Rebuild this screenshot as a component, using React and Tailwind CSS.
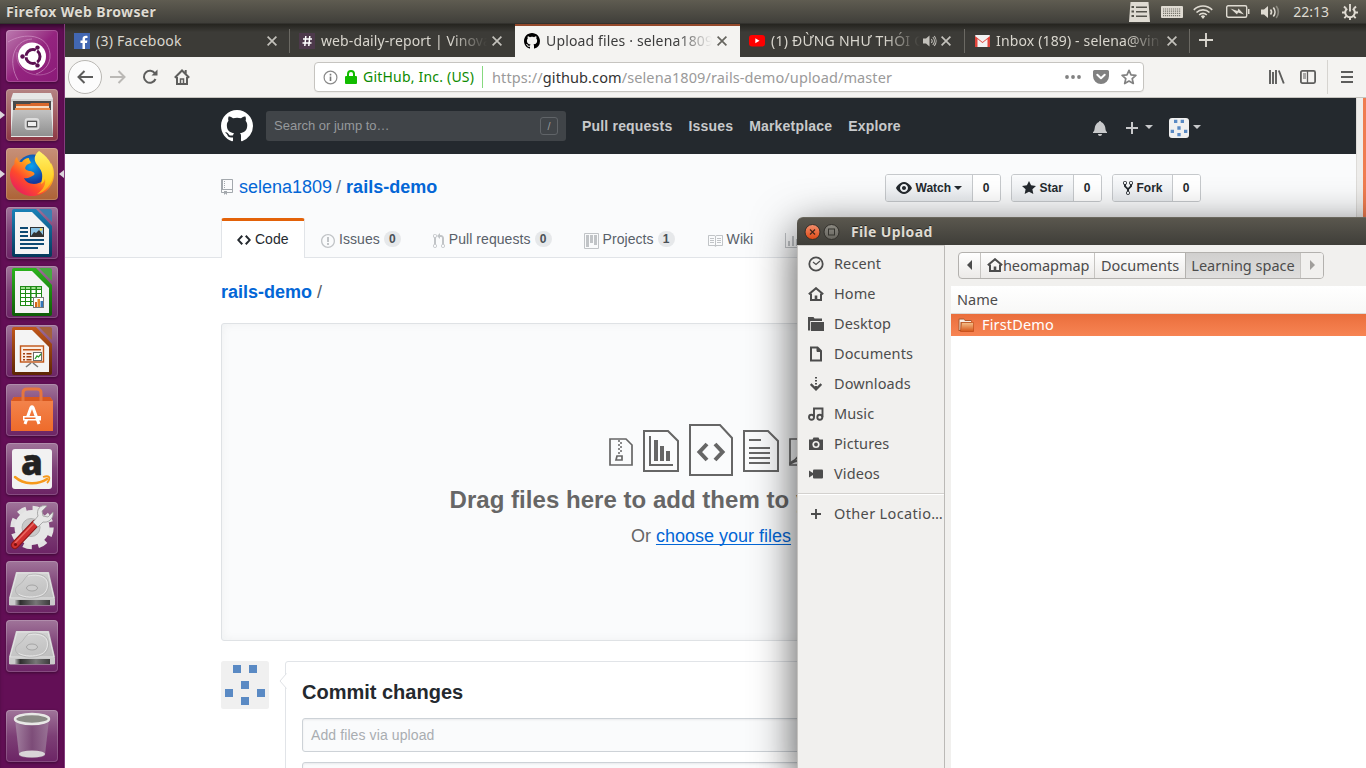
import React from "react";

const UI = "font-['Noto_Sans','Open_Sans',sans-serif]";

const OCT = {
  github: [16, "M8 0C3.58 0 0 3.58 0 8c0 3.54 2.29 6.53 5.47 7.59.4.07.55-.17.55-.38 0-.19-.01-.82-.01-1.49-2.01.37-2.53-.49-2.69-.94-.09-.23-.48-.94-.82-1.13-.28-.15-.68-.52-.01-.53.63-.01 1.08.58 1.23.82.72 1.21 1.87.87 2.33.66.07-.52.28-.87.51-1.07-1.78-.2-3.64-.89-3.64-3.95 0-.87.31-1.59.82-2.15-.08-.2-.36-1.02.08-2.12 0 0 .67-.21 2.2.82.64-.18 1.32-.27 2-.27.68 0 1.36.09 2 .27 1.53-1.04 2.2-.82 2.2-.82.44 1.1.16 1.92.08 2.12.51.56.82 1.27.82 2.15 0 3.07-1.87 3.75-3.65 3.95.29.25.54.73.54 1.48 0 1.07-.01 1.93-.01 2.2 0 .21.15.46.55.38A8.013 8.013 0 0 0 16 8c0-4.42-3.58-8-8-8z"],
  repo: [12, "M4 9H3V8h1v1zm0-3H3v1h1V6zm0-2H3v1h1V4zm0-2H3v1h1V2zm8-1v12c0 .55-.45 1-1 1H6v2l-1.5-1.5L3 16v-2H1c-.55 0-1-.45-1-1V1c0-.55.45-1 1-1h10c.55 0 1 .45 1 1zm-1 10H1v2h2v-1h3v1h5v-2zm0-10H2v9h9V1z"],
  code: [14, "M9.5 3L8 4.5 11.5 8 8 11.5 9.5 13 14 8 9.5 3zm-5 0L0 8l4.5 5L6 11.5 2.5 8 6 4.5 4.5 3z"],
  issue: [14, "M7 2.3c3.14 0 5.7 2.56 5.7 5.7s-2.56 5.7-5.7 5.7A5.71 5.71 0 0 1 1.3 8c0-3.14 2.56-5.7 5.7-5.7zM7 1C3.14 1 0 4.14 0 8s3.14 7 7 7 7-3.14 7-7-3.14-7-7-7zm1 3H6v5h2V4zm0 6H6v2h2v-2z"],
  pr: [12, "M11 11.28V5c-.03-.78-.34-1.47-.94-2.06C9.46 2.35 8.78 2.03 8 2H7V0L4 3l3 3V4h1c.27.02.48.11.69.31.21.2.3.42.31.69v6.28A1.993 1.993 0 0 0 10 15a1.993 1.993 0 0 0 1-3.72zm-1 2.92c-.66 0-1.2-.55-1.2-1.2 0-.65.55-1.2 1.2-1.2.65 0 1.2.55 1.2 1.2 0 .65-.55 1.2-1.2 1.2zM4 3c0-1.11-.89-2-2-2a1.993 1.993 0 0 0-1 3.72v6.56A1.993 1.993 0 0 0 2 15a1.993 1.993 0 0 0 1-3.72V4.72c.59-.34 1-.98 1-1.72zm-.8 10c0 .66-.55 1.2-1.2 1.2-.65 0-1.2-.55-1.2-1.2 0-.65.55-1.2 1.2-1.2.65 0 1.2.55 1.2 1.2zM2 4.2C1.34 4.2.8 3.65.8 3c0-.65.55-1.2 1.2-1.2.65 0 1.2.55 1.2 1.2 0 .65-.55 1.2-1.2 1.2z"],
  project: [15, "M10 12h3V2h-3v10zm-4-2h3V2H6v8zm-4 4h3V2H2v12zm-1 1h13V1H1v14zM14 0H1a1 1 0 0 0-1 1v14a1 1 0 0 0 1 1h13a1 1 0 0 0 1-1V1a1 1 0 0 0-1-1z"],
  book: [16, "M3 5h4v1H3V5zm0 3h4V7H3v1zm0 2h4V9H3v1zm11-5h-4v1h4V5zm0 2h-4v1h4V7zm0 2h-4v1h4V9zm2-6v9c0 .55-.45 1-1 1H9.5l-1 1-1-1H2c-.55 0-1-.45-1-1V3c0-.55.45-1 1-1h5.5l1 1 1-1H15c.55 0 1 .45 1 1zm-8 .5L7.5 3H2v9h6V3.5zm7-.5H9.5l-.5.5V12h6V3z"],
  graph: [16, "M16 14v1H0V0h1v14h15zM5 13H3V8h2v5zm4 0H7V3h2v10zm4 0h-2V6h2v7z"],
  bell: [14, "M14 12v1H0v-1l.73-.58c.77-.77.81-2.55 1.19-4.42C2.69 3.23 6 2 6 2c0-.55.45-1 1-1s1 .45 1 1c0 0 3.39 1.23 4.16 5 .38 1.88.42 3.66 1.19 4.42l.66.58H14zm-7 4c1.11 0 2-.89 2-2H5c0 1.11.89 2 2 2z"],
  plus: [12, "M12 9H7v5H5V9H0V7h5V2h2v5h5v2z"],
  eye: [16, "M8.06 2C3 2 0 8 0 8s3 6 8.06 6C13 14 16 8 16 8s-3-6-7.94-6zM8 12c-2.2 0-4-1.78-4-4 0-2.2 1.8-4 4-4 2.22 0 4 1.8 4 4 0 2.22-1.78 4-4 4zm2-4c0 1.11-.89 2-2 2-1.11 0-2-.89-2-2 0-1.11.89-2 2-2 1.11 0 2 .89 2 2z"],
  star: [14, "M14 6l-4.9-.64L7 1 4.9 5.36 0 6l3.6 3.26L2.67 14 7 11.67 11.33 14l-.93-4.74L14 6z"],
  fork: [10, "M8 1a1.993 1.993 0 0 0-1 3.72V6L5 8 3 6V4.72A1.993 1.993 0 0 0 2 1a1.993 1.993 0 0 0-1 3.72V6.5l3 3v1.78A1.993 1.993 0 0 0 5 15a1.993 1.993 0 0 0 1-3.72V9.5l3-3V4.72A1.993 1.993 0 0 0 8 1zM2 4.2C1.34 4.2.8 3.65.8 3c0-.65.55-1.2 1.2-1.2.65 0 1.2.55 1.2 1.2 0 .65-.55 1.2-1.2 1.2zm3 10c-.66 0-1.2-.55-1.2-1.2 0-.65.55-1.2 1.2-1.2.65 0 1.2.55 1.2 1.2 0 .65-.55 1.2-1.2 1.2zm3-10c-.66 0-1.2-.55-1.2-1.2 0-.65.55-1.2 1.2-1.2.65 0 1.2.55 1.2 1.2 0 .65-.55 1.2-1.2 1.2z"],
};

function Oct({ n, h = 16, className = "" }) {
  const [w, d] = OCT[n];
  return (
    <svg width={(w * h) / 16} height={h} viewBox={`0 0 ${w} 16`} className={"shrink-0 " + className} fill="currentColor" fillRule="evenodd">
      <path d={d} />
    </svg>
  );
}

/* ---------- top panel ---------- */

function TopPanel() {
  return (
    <div className={UI + " flex h-6 shrink-0 items-center border-b border-[#33322e] bg-linear-to-b from-[#5f5c51] to-[#403f3a] pl-1.5 text-[#dfdbd2]"}>
      <span className="flex-1 text-[14px] leading-none font-bold tracking-[0.36px] [text-shadow:0_-1px_0_rgba(0,0,0,0.4)]">Firefox Web Browser</span>
      <svg width="21" height="20" viewBox="0 0 21 20" className="mr-[11px]">
        <path d="M1.500 0h18L21 20H0z" fill="#dfdbd2" />
        <g fill="#55534b">
          <path d="M2.500 4h2.500v2H2.500zM7 4.500h11V6H7zM2.500 8.500h2.500v2H2.500zM7 9h11v1.500H7zM2.500 13h2.500v2H2.500zM7 13.500h11V15H7z" />
        </g>
      </svg>
      <svg width="22" height="12" viewBox="0 0 22 12" className="mr-[10px]">
        <rect width="22" height="12" rx="1" fill="#dfdbd2" />
        <g stroke="#77756c" strokeWidth="1.200" strokeDasharray="1.200 .8">
          <path d="M2 3h18M2 5.200h18M2 7.400h18M2 9.600h18" />
        </g>
      </svg>
      <svg width="20" height="14" viewBox="0 0 20 14" className="mr-[13px]" fill="none" stroke="#dfdbd2" strokeWidth="1.700">
        <path d="M.8 4.800a13 13 0 0 1 18.400 0M3.500 7.500a9.300 9.300 0 0 1 13 0M6.200 10a5.400 5.400 0 0 1 7.600 0" />
        <path d="M7.800 11.300L10 14l2.200-2.700a3.400 3.400 0 0 0-4.400 0z" fill="#dfdbd2" stroke="none" />
      </svg>
      <svg width="24" height="13" viewBox="0 0 24 13" className="mr-[11px]">
        <rect x=".7" y=".7" width="20" height="11.600" rx="1.500" fill="none" stroke="#dfdbd2" strokeWidth="1.400" />
        <path d="M22 4h1.500v5H22z" fill="#dfdbd2" />
        <path d="M4.500 3.500l7 2.500 1-2.500 5.500 6-6-2-1 2z" fill="#dfdbd2" />
      </svg>
      <svg width="20" height="14" viewBox="0 0 20 14" className="mr-[12px]" fill="none" stroke="#dfdbd2" strokeWidth="1.700">
        <path d="M0 4.500h3L7 1v12L3 9.500H0z" fill="#dfdbd2" stroke="none" />
        <path d="M9.500 4.500a4 4 0 0 1 0 5M12.300 2.500a7 7 0 0 1 0 9" />
        <path d="M15.200 1a9.500 9.500 0 0 1 0 12" opacity=".4" />
      </svg>
      <span className="mr-[13px] text-[14px] leading-none">22:13</span>
      <svg width="16" height="16" viewBox="0 0 16 16" className="mr-[8px]" fill="none" stroke="#dfdbd2">
        <path d="M5.200 4.600a4.800 4.800 0 1 0 5.600 0" strokeWidth="2" />
        <path d="M8 0v7.500M0 8.500h3M13 8.500h3M2 2.500l2 2M14 2.500l-2 2M2.300 14.200l2-2M13.700 14.200l-2-2M8 13v3" strokeWidth="1.900" />
      </svg>
    </div>
  );
}

/* ---------- launcher ---------- */

const plain = "bg-linear-to-b from-[#a0759a] via-[#7d3f76] to-[#6c2465]";

function UbuntuIcon() {
  return (
    <svg width="52" height="52" viewBox="0 0 52 52">
      <g fill="none" stroke="#d9a3cf" opacity=".6">
        <path d="M2 12C18 2 42 4 44 24c1 12-8 18-14 20" />
        <path d="M12 50C2 34 6 10 26 9" />
        <path d="M50 38C36 52 8 44 11 22" opacity=".7" />
      </g>
      <circle cx="26" cy="26.500" r="14" fill="#fff" />
      <circle cx="27" cy="26.500" r="7" fill="none" stroke="#5c1152" strokeWidth="3" />
      <g stroke="#fff" strokeWidth="1.400">
        <path d="M27 26.500h-10M27 26.500l5-8.700M27 26.500l5 8.700" />
      </g>
      <circle cx="27" cy="26.500" r="5" fill="#fff" />
      <g fill="#5c1152"><circle cx="16.500" cy="26.500" r="2.200" /><circle cx="31.500" cy="17.600" r="2.200" /><circle cx="31.500" cy="35.400" r="2.200" /></g>
    </svg>
  );
}

function FilesIcon() {
  return (
    <svg width="52" height="52" viewBox="0 0 52 52">
      <defs><linearGradient id="cab" x2="0" y2="1"><stop stopColor="#c2c2c2" /><stop offset="1" stopColor="#8f8f8f" /></linearGradient></defs>
      <path d="M7 4h38l2 6v38H5V10z" fill="#e6e6e6" />
      <path d="M5 10h42v3H5z" fill="#d0d0d0" />
      <rect x="7" y="12" width="38" height="12" fill="#4a4a4a" />
      <path d="M10 15h14l1-1h18v8H10z" fill="#d9682c" />
      <path d="M10 17h33v2H10z" fill="#f8ddc4" /><path d="M9 19h35v4H9z" fill="#e88a48" />
      <path d="M7 21h38l2 26H5z" fill="url(#cab)" />
      <rect x="19.500" y="30" width="13" height="10" rx="2.500" fill="none" stroke="#ddd" strokeWidth="1.800" />
      <rect x="21.500" y="32.500" width="9" height="5" fill="#eee" stroke="#555" strokeWidth="1" />
    </svg>
  );
}

function FirefoxIcon() {
  return (
    <svg width="52" height="52" viewBox="0 0 52 52">
      <defs>
        <radialGradient id="ffb" cx=".45" cy=".35"><stop stopColor="#0aa4f0" /><stop offset="1" stopColor="#133a9c" /></radialGradient>
        <linearGradient id="fft" x1="1" y1="0" x2=".1" y2="1"><stop stopColor="#fff14f" /><stop offset=".35" stopColor="#ffb21c" /><stop offset=".65" stopColor="#ff4a2b" /><stop offset="1" stopColor="#e0126e" /></linearGradient>
        <linearGradient id="ffy" x2="0" y2="1"><stop stopColor="#fff36b" /><stop offset=".7" stopColor="#ffcd20" /><stop offset="1" stopColor="#ff9a1f" /></linearGradient>
      </defs>
      <circle cx="27" cy="23" r="16.500" fill="url(#ffb)" />
      <path d="M11 9c-2 2-3 4-2.500 7C5 19 4 23 4 27c0 11 10 21 22 21 13 0 22-10 22-22 0-4-1-8-3-11l-4 8c0 8-6 13-13 13-5 0-9-3-10-6 4 1 6-1 10-3 2-2-2-4-5-4-3-1-5-2-3-5 1-2 3-2 5-3-1-3-2-3-2-5-3 0-6 2-7 4-3 0-4-1-5-5z" fill="url(#fft)" />
      <path d="M33 3c4 3 14 9 14 23 0 9-8 19-16 20 7-5 9-10 8-15-1 3-2 4-4 5 2-8 2-12-3-18-5-6-4-11 1-15z" fill="url(#ffy)" />
    </svg>
  );
}

function DocIcon({ id, c1, c2, dark, children }) {
  return (
    <svg width="52" height="52" viewBox="0 0 52 52">
      <defs><linearGradient id={id} x2="0" y2="1"><stop stopColor={c1} /><stop offset="1" stopColor={dark} /></linearGradient></defs>
      <path d="M8 2h22l16 17v29a2 2 0 0 1-2 2H8a2 2 0 0 1-2-2V4a2 2 0 0 1 2-2z" fill={`url(#${id})`} />
      <path d="M9 5h17l17 17v25H9z" fill="#f4f4f4" />
      <path d="M33 2h11a2 2 0 0 1 2 2v11z" fill={c2} />
      {children}
    </svg>
  );
}

function WriterIcon() {
  return (
    <DocIcon id="wr" c1="#1a82b8" c2="#3d7fb0" dark="#04385a">
      <path d="M14 20h8v2h-8zM14 24h8v2h-8zM14 28h8v2h-8zM14 32h24v2H14zM14 36h24v2H14zM14 40h18v2H14z" fill="#0d4a73" />
      <rect x="24.500" y="20.500" width="13" height="9" fill="#8fc6e6" stroke="#333" />
      <path d="M25 29l3-4 2 1 3-3 4 5v1z" fill="#333" /><circle cx="35" cy="22.500" r="1.300" fill="#f5d84a" />
    </DocIcon>
  );
}

function CalcIcon() {
  return (
    <DocIcon id="ca" c1="#2cb31c" c2="#47a840" dark="#0f5c08">
      <rect x="14" y="20" width="22" height="20" fill="#1f8a16" />
      <g fill="#fff">
        {[24, 28, 32, 36].map((y) => [15, 20, 25.500, 31].map((x) => <rect key={x + "-" + y} x={x} y={y} width="4" height="3" />))}
      </g>
      <g fill="#9fe08f">{[15, 20, 25.500, 31].map((x) => <rect key={x} x={x} y="21" width="4" height="2" />)}</g>
      <rect x="27.500" y="31.500" width="10" height="10" fill="#fff" stroke="#777" />
      <path d="M29 36h2v5h-2z" fill="#d4661c" /><path d="M31.500 33h2.500v8h-2.500z" fill="#e08a2a" /><path d="M34.500 35H37v6h-2.500z" fill="#3476b8" />
    </DocIcon>
  );
}

function ImpressIcon() {
  return (
    <DocIcon id="im" c1="#c2571a" c2="#a3603c" dark="#5c2605">
      <rect x="14.500" y="21" width="23" height="16" fill="#fbeee4" stroke="#c05416" strokeWidth="1.400" />
      <path d="M17 24h18v1.500H17z" fill="#c05416" />
      <path d="M17 28h2v1.500h-2zM20.500 28h5v1.500h-5zM17 31h2v1.500h-2zM20.500 31h5v1.500h-5zM17 34h2v1.500h-2zM20.500 34h5v1.500h-5z" fill="#a0410f" />
      <rect x="27.500" y="27.500" width="8" height="8" fill="#fff" stroke="#6a6a6a" /><path d="M29 34l2-3 1.500 1L35 29" fill="none" stroke="#2c9c2c" strokeWidth="1.300" />
      <path d="M25 38l-5 4M27 38l5 4" stroke="#777" strokeWidth="1.600" />
    </DocIcon>
  );
}

function SoftwareIcon() {
  return (
    <svg width="52" height="52" viewBox="0 0 52 52">
      <defs><linearGradient id="bag" x2="0" y2="1"><stop stopColor="#f3864f" /><stop offset="1" stopColor="#ee6b2b" /></linearGradient></defs>
      <path d="M8 13h36l3 4v30H5V17z" fill="url(#bag)" /><path d="M8 13h36l3 4H5z" fill="#d9581e" />
      <path d="M17 17V9q0-4 4-4h10q4 0 4 4v8" fill="none" stroke="#e5763f" strokeWidth="3" />
      <path d="M19 40l6-16.500q1-1.500 2 0L33 40" fill="none" stroke="#fff" strokeWidth="3" /><path d="M17 32h18v4.500H17z" fill="#fff" /><path d="M18.500 33.500h11v1.500h-11z" fill="#ee6b2b" />
    </svg>
  );
}

function AmazonIcon() {
  return (
    <svg width="52" height="52" viewBox="0 0 52 52">
      <rect x="6" y="6" width="40" height="40" rx="3" fill="#f2f2f2" />
      <text x="25.800" y="31.500" textAnchor="middle" fontFamily="Open Sans" fontWeight="800" fontSize="35" fill="#222" stroke="#222" strokeWidth=".5">a</text>
      <path d="M9 34c9 8 23 8 32 2" fill="none" stroke="#f6991c" strokeWidth="2.500" strokeLinecap="round" />
      <path d="M37 34c3-1 5-1 6 0s0 4-2 6" fill="none" stroke="#f6991c" strokeWidth="1.800" />
    </svg>
  );
}

function SettingsIcon() {
  return (
    <svg width="52" height="52" viewBox="0 0 52 52">
      <circle cx="26" cy="25.500" r="18.500" fill="none" stroke="#e2e2e2" strokeWidth="6.500" strokeDasharray="8.300 6.230" />
      <circle cx="26" cy="25.500" r="13" fill="#dadada" stroke="#e6e6e6" strokeWidth="9" />
      <circle cx="25" cy="25.500" r="9" fill="#c9c9c9" stroke="#b2b2b2" />
      <path d="M9 43l20-21" stroke="#8f1616" strokeWidth="8" strokeLinecap="round" />
      <path d="M9 43l20-21" stroke="#d03030" strokeWidth="6" strokeLinecap="round" />
      <path d="M9 41l19-20" stroke="#ea6a62" strokeWidth="1.500" />
      <circle cx="9.500" cy="42.500" r="1.500" fill="#7a1010" />
      <path d="M27 20l5 5 5-5c5 1 11-3 10-10l-5 5-5-1-1-5 5-5c-7-2-11 4-9 10z" fill="#e6e6e6" stroke="#999" strokeWidth=".8" />
    </svg>
  );
}

function DriveIcon({ id }) {
  return (
    <svg width="52" height="52" viewBox="0 0 52 52">
      <defs>
        <linearGradient id={id} x2=".3" y2="1"><stop stopColor="#d6d6d6" /><stop offset="1" stopColor="#bdbdbd" /></linearGradient>
        <linearGradient id={id + "f"}><stop stopColor="#bbb" /><stop offset=".15" stopColor="#2e2e2e" /><stop offset=".6" stopColor="#777" /><stop offset="1" stopColor="#3c3c3c" /></linearGradient>
      </defs>
      <path d="M10 11h33l6 26v6a1.500 1.500 0 0 1-1.500 1.500h-43A1.500 1.500 0 0 1 3 43v-6z" fill={`url(#${id})`} />
      <path d="M3 38h46v6H3z" fill="#cbcbcb" /><path d="M9 39h35v5H9z" fill={`url(#${id}f)`} />
      <path d="M11 12h31l6 25H4z" fill="none" stroke="#e4e4e4" />
      <path d="M22 14c6-2 16-1 19 4s2 14-5 17-18 3-24-1c-4-3-3-8 1-10s6-8 9-10z" fill="none" stroke="#b4b4b4" strokeWidth=".9" />
      <path d="M22 15.200c6-2 15-1 18 3.500s1.500 13-5 15.500-17 2.500-22.500-1" fill="none" stroke="#e9e9e9" strokeWidth=".9" />
      <ellipse cx="26" cy="27" rx="5.500" ry="3" fill="#cdcdcd" stroke="#9a9a9a" strokeWidth=".8" />
    </svg>
  );
}

function TrashIcon() {
  return (
    <svg width="52" height="52" viewBox="0 0 52 52">
      <defs><linearGradient id="tr"><stop stopColor="#a88aa6" /><stop offset=".5" stopColor="#7d4f79" /><stop offset="1" stopColor="#9d7b9a" /></linearGradient></defs>
      <path d="M9 9l4 36c1 4 25 4 26 0l4-36z" fill="url(#tr)" opacity=".85" />
      <ellipse cx="26" cy="44" rx="13" ry="3.500" fill="#d9d5d8" />
      <ellipse cx="26" cy="9" rx="17" ry="5" fill="#8b8b86" stroke="#e8e8e6" strokeWidth="2.500" />
    </svg>
  );
}

function Tile({ bg = plain, left, right, className = "", children }) {
  return (
    <div className={"relative ml-1.5 size-[52px] shrink-0 " + className}>
      <div className={"size-[52px] overflow-hidden rounded-[4px] shadow-[inset_0_0_0_1px_rgba(255,255,255,0.18),0_1px_3px_rgba(0,0,0,0.4)] " + bg}>{children}</div>
      {left && <svg width="5" height="8" viewBox="0 0 5 8" className="absolute top-[22px] -left-1.5"><path d="M0 0l5 4-5 4z" fill="#dcd6dc" /></svg>}
      {right && <svg width="5" height="8" viewBox="0 0 5 8" className="absolute top-[22px] left-[53px]"><path d="M5 0L0 4l5 4z" fill="#dcd6dc" /></svg>}
    </div>
  );
}

function Launcher() {
  return (
    <div className="flex w-[65px] shrink-0 flex-col gap-[7px] border-r border-[#863c7e] bg-[#630f56] pt-1.5 shadow-[inset_0_5px_5px_-2px_rgba(0,0,0,0.5)]">
      <Tile bg="bg-linear-to-br from-[#bc7ab0] via-[#94247f] to-[#8b1a78]"><UbuntuIcon /></Tile>
      <Tile left bg="bg-linear-to-b from-[#b48383] to-[#8c3744]"><FilesIcon /></Tile>
      <Tile left right bg="bg-linear-to-b from-[#c79078] to-[#ad6336]"><FirefoxIcon /></Tile>
      <Tile><WriterIcon /></Tile>
      <Tile><CalcIcon /></Tile>
      <Tile><ImpressIcon /></Tile>
      <Tile><SoftwareIcon /></Tile>
      <Tile><AmazonIcon /></Tile>
      <Tile><SettingsIcon /></Tile>
      <Tile><DriveIcon id="d1" /></Tile>
      <Tile><DriveIcon id="d2" /></Tile>
      <Tile className="mt-[31px]"><TrashIcon /></Tile>
    </div>
  );
}

/* ---------- browser chrome ---------- */

function Close({ className = "text-[#c3c1bb]" }) {
  return (
    <svg width="10" height="10" viewBox="0 0 10 10" className={"shrink-0 " + className} stroke="currentColor" strokeWidth="1.700">
      <path d="M.6.6l8.800 8.800M9.400.6L.6 9.400" />
    </svg>
  );
}

function Tab({ icon, title, active, last, sound, fade = true, track = "tracking-[0.15px]" }) {
  const base = active
    ? "border-t-2 border-[#94492b] bg-[#f4f3f1] text-[#3c3c3c]"
    : "border-t-2 border-transparent text-[#d9d6ce]";
  return (
    <div className={"flex h-full w-[225px] shrink-0 items-center pb-0.5 pl-[9px] " + base}>
      <div className="mr-[6px] flex size-4 shrink-0 items-center justify-center">{icon}</div>
      <div className={(sound ? "w-[149px]" : "w-[166px]") + " shrink-0 overflow-hidden text-[14px] leading-5 whitespace-nowrap " + track + (fade ? " [mask-image:linear-gradient(to_left,transparent,black_36px)]" : "")}>{title}</div>
      {sound && (
        <svg width="14" height="12" viewBox="0 0 14 12" className="mr-1 ml-[3px] shrink-0" fill="none" stroke="#c3c1bb">
          <path d="M0 3.500h3L6.500.5v11L3 8.500H0z" fill="#c3c1bb" stroke="none" /><path d="M8.300 4a3 3 0 0 1 0 4M9.800 2a6 6 0 0 1 0 8M11.300 1a8 8 0 0 1 0 10" strokeWidth="1.100" />
        </svg>
      )}
      <Close className={(active ? "text-[#66655f]" : "text-[#c3c1bb]") + (sound ? " ml-0" : " ml-[5px]")} />
      {!active && !last && <div className="ml-auto h-6 w-px bg-[#6b6963]" />}
    </div>
  );
}

function TabStrip() {
  return (
    <div className={UI + " flex h-[33px] shrink-0 bg-linear-to-b from-[#25241f] via-[#3c3b37] via-25% to-[#3c3b37]"}>
      <Tab fade={false} track="tracking-[0.25px]" title="(3) Facebook" icon={
        <svg width="16" height="16" viewBox="0 0 16 16"><rect width="16" height="16" fill="#4267b2" /><path d="M11 16V10h2l.4-2.400H11V6.300c0-.8.4-1.200 1.300-1.200h1.200V3c-2.900-.5-5 .3-5 3v1.600H6.500V10h2v6z" fill="#fff" /></svg>} />
      <Tab last title="web-daily-report | Vinova" track="tracking-[0.1px]" icon={
        <svg width="16" height="16" viewBox="0 0 16 16"><rect width="16" height="16" fill="#4d394b" /><path d="M6.800 3l-1 10M10.800 3l-1 10M4 6h9M3.500 10h9" stroke="#fff" strokeWidth="1.500" /></svg>} />
      <Tab active title="Upload files · selena1809/rails" icon={<Oct n="github" className="text-black" />} />
      <Tab sound title="(1) ĐỪNG NHƯ THÓI QUEN" track="tracking-[0.25px]" icon={
        <svg width="16" height="12" viewBox="0 0 16 12"><rect width="16" height="11.500" rx="3" fill="#f00" /><path d="M6.300 3.300v5l4.200-2.500z" fill="#fff" /></svg>} />
      <Tab title="Inbox (189) - selena@vinova" icon={
        <svg width="15" height="12" viewBox="0 0 15 12"><rect width="15" height="12" rx="1" fill="#f2f2f2" /><path d="M0 12V1l7.500 6L15 1v11h-2.500V4L7.500 8l-5-4v8z" fill="#e0433a" /><path d="M1 0h13L7.500 5.500z" fill="#f2f2f2" /></svg>} />
      <svg width="14" height="14" viewBox="0 0 14 14" className="mt-[9px] ml-[9px]" stroke="#d9d6ce" strokeWidth="1.900"><path d="M7 0v14M0 7h14" /></svg>
    </div>
  );
}

function Toolbar() {
  return (
    <div className={UI + " flex h-[41px] shrink-0 items-center border-b border-[#c5c3be] bg-[#f4f3f1] text-[#5d5d5c]"}>
      <div className="ml-[3px] flex size-[34px] items-center justify-center rounded-full border border-[#b9b7b3] bg-[#fcfcfc]">
        <svg width="16" height="14" viewBox="0 0 16 14" fill="none" stroke="currentColor" strokeWidth="2"><path d="M16 7H1.500M7.500 1l-6 6 6 6" /></svg>
      </div>
      <svg width="16" height="14" viewBox="0 0 16 14" className="ml-2 text-[#bab8b5]" fill="none" stroke="currentColor" strokeWidth="2"><path d="M0 7h14.500M8.500 1l6 6-6 6" /></svg>
      <svg width="16" height="16" viewBox="0 0 16 16" className="ml-[16px]" fill="none" stroke="currentColor" strokeWidth="2"><path d="M13 4.500A6 6 0 1 0 13.500 10" /><path d="M15.500.5v6h-6z" fill="currentColor" stroke="none" /></svg>
      <svg width="16" height="16" viewBox="0 0 16 16" className="ml-[16px]" fill="none" stroke="currentColor" strokeWidth="2"><path d="M.8 8.700L8 1.500l7.200 7.200M3 8v7h10V8M11.700 1v4" /><path d="M6.500 15v-5h3v5" strokeWidth="1.500" /></svg>
      <div className="ml-[124px] flex h-[30px] w-[830px] items-center rounded-[4px] border border-[#c6c4c0] bg-white shadow-[0_1px_1px_rgba(0,0,0,0.04)]">
        <svg width="15" height="15" viewBox="0 0 15 15" className="ml-[8px]"><circle cx="7.500" cy="7.500" r="6.400" fill="none" stroke="#8a8a8a" strokeWidth="1.200" /><path d="M6.700 6.500h1.600V11H6.700zM6.700 3.800h1.600v1.600H6.700z" fill="#777" /></svg>
        <svg width="12" height="14" viewBox="0 0 12 14" className="ml-[7px]"><path d="M3 7V4a3 3 0 0 1 6 0v3" fill="none" stroke="#12bc00" strokeWidth="2" /><rect y="6" width="12" height="8" rx="1" fill="#12bc00" /></svg>
        <span className="ml-[6px] w-[111px] text-[14px] leading-5 tracking-[0.2px] whitespace-nowrap text-[#0d8a00]">GitHub, Inc. (US)</span>
        <div className="ml-[8px] h-[22px] w-px bg-[#86d97f]" />
        <span className="ml-[9px] flex-1 text-[14.500px] leading-5 tracking-[0.1px] whitespace-nowrap text-[#9a9a9a]">https://<span className="text-[#333]">github.com</span>/selena1809/rails-demo/upload/master</span>
        <svg width="16" height="4" viewBox="0 0 16 4" fill="#818181"><circle cx="2" cy="2" r="1.900" /><circle cx="8" cy="2" r="1.900" /><circle cx="14" cy="2" r="1.900" /></svg>
        <svg width="16" height="14" viewBox="0 0 16 14" className="ml-[12px]"><path d="M1.500 0h13A1.500 1.500 0 0 1 16 1.500V6a8 8 0 0 1-16 0V1.500A1.500 1.500 0 0 1 1.500 0z" fill="#818181" /><path d="M4.300 4.800L8 8.300l3.700-3.500" fill="none" stroke="#fff" strokeWidth="2" strokeLinecap="round" strokeLinejoin="round" /></svg>
        <svg width="16" height="16" viewBox="0 0 16 16" className="mr-[6px] ml-[12px]" fill="none" stroke="#818181" strokeWidth="1.700" strokeLinejoin="round"><path d="M8 1.300l2 4.500 4.900.5-3.700 3.300 1.100 4.900L8 12l-4.300 2.500 1.100-4.900L1.100 6.300 6 5.800z" /></svg>
      </div>
      <svg width="16" height="14" viewBox="0 0 16 14" className="ml-[125px]" fill="none" stroke="currentColor" strokeWidth="1.900"><path d="M1 0v14M4 2v12M7 0v14M9.800 .5l5 13" /></svg>
      <svg width="16" height="14" viewBox="0 0 16 14" className="ml-[15px]" fill="none" stroke="currentColor"><rect x=".9" y=".9" width="14.200" height="12.200" rx="1.500" strokeWidth="1.800" /><path d="M7.500 1v12" strokeWidth="1.300" /><path d="M3 4h3M3 6h3M3 8h3" /></svg>
      <div className="ml-[11px] h-[34px] w-px bg-[#d6d4d0]" />
      <svg width="12" height="12" viewBox="0 0 12 12" className="ml-[13px]" stroke="currentColor" strokeWidth="2"><path d="M0 1h12M0 6h12M0 11h12" /></svg>
    </div>
  );
}

/* ---------- page ---------- */

function Caret({ className = "" }) {
  return <svg width="8" height="4" viewBox="0 0 8 4" className={className} fill="currentColor"><path d="M0 0h8L4 4z" /></svg>;
}

function Identicon({ className }) {
  return (
    <svg viewBox="0 0 48 48" className={className}>
      <rect width="48" height="48" rx="2.500" fill="#f0f0f0" />
      <path d="M12 4h8v8h-8zM28 4h8v8h-8zM20 20h8v8h-8zM4 28h8v8H4zM36 28h8v8h-8zM20 36h8v8h-8z" fill="#5a8ac4" />
    </svg>
  );
}

function PageHeader() {
  return (
    <div className="flex h-14 shrink-0 items-center bg-[#24292e] pl-[156px] text-[14px] font-bold text-[#c8c9cb]">
      <Oct n="github" h={32} className="text-white" />
      <div className="ml-[13px] flex h-[30px] w-[300px] items-center justify-between rounded-[3px] bg-[#404448] pr-2 pl-2 text-[13px] font-normal text-[#96999c]">
        <span>Search or jump to…</span>
        <div className="flex h-[18px] w-[18px] items-center justify-center rounded-[3px] border border-[#606468] text-[11px]">/</div>
      </div>
      <div className="ml-4 flex w-[320px] gap-4 tracking-[0.19px]">
        <span>Pull requests</span><span>Issues</span><span>Marketplace</span><span>Explore</span>
      </div>
      <Oct n="bell" className="mt-[3px] ml-[191px]" />
      <Oct n="plus" className="mt-[3px] ml-[19px]" />
      <Caret className="mt-px ml-[7px]" />
      <Identicon className="mt-1 ml-4 size-5 rounded-[3px]" />
      <Caret className="mt-px ml-1" />
    </div>
  );
}

function SocialButton({ icon, label, caret, width }) {
  return (
    <div className={"flex h-7 items-stretch overflow-hidden rounded-[3px] border border-[#c6c9cc] text-[12px] font-bold text-[#24292e] " + width}>
      <div className="flex flex-1 items-center bg-linear-to-b from-[#fafbfc] to-[#e9ecef] pl-[10px]">
        {icon}<span className="ml-[3.500px]">{label}</span>{caret && <Caret className="ml-[3px]" />}
      </div>
      <div className="flex w-[28px] items-center justify-center border-l border-[#c6c9cc] bg-white pr-px">0</div>
    </div>
  );
}

function Count({ children }) {
  return <span className="ml-1 flex h-4 min-w-[17px] items-center justify-center rounded-full bg-[#e6e8ea] text-[12px] leading-none font-bold text-[#4a5056]">{children}</span>;
}

function RepoTab({ icon, label, count }) {
  return (
    <div className="flex items-center border-x border-transparent px-[15px] pt-[3px] pb-px">
      <Oct n={icon} className="mt-[3px]" /><span className="ml-1 tracking-[0.06px]">{label}</span>{count && <Count>{count}</Count>}
    </div>
  );
}

function RepoHead() {
  return (
    <div className="flex h-[104px] shrink-0 flex-col border-b border-[#e1e4e8] bg-[#fafbfc] pl-[156px]">
      <div className="flex h-[64px] shrink-0 items-start pt-5">
        <div className="flex h-[26px] w-[664px] items-center text-[18px] text-[#0366d6]">
          <Oct n="repo" className="text-[#a3a8ad]" />
          <span className="ml-[6px]">selena1809</span><span className="mr-[5px] ml-1 text-[#6a737d]">/</span><span className="font-bold">rails-demo</span>
        </div>
        <div className="flex gap-[10px]">
          <SocialButton width="w-[116px]" icon={<Oct n="eye" />} label="Watch" caret />
          <SocialButton width="w-[91px]" icon={<Oct n="star" />} label="Star" />
          <SocialButton width="w-[89px]" icon={<Oct n="fork" />} label="Fork" />
        </div>
      </div>
      <div className="-mb-px flex h-10 shrink-0 items-stretch text-[14px] text-[#586069] [&_svg]:text-[#c1c4c7]">
        <div className="flex w-[84px] items-center rounded-t-[3px] border-x border-t-3 border-x-[#e1e4e8] border-t-[#e36209] bg-white pb-px pl-[15px] text-[#24292e] [&_svg]:text-[#24292e]!">
          <Oct n="code" className="mt-[2px]" /><span className="ml-1">Code</span>
        </div>
        <RepoTab icon="issue" label="Issues" count="0" />
        <RepoTab icon="pr" label="Pull requests" count="0" />
        <RepoTab icon="project" label="Projects" count="1" />
        <RepoTab icon="book" label="Wiki" />
        <RepoTab icon="graph" label="" />
      </div>
    </div>
  );
}

function FileArt() {
  const s = { fill: "none", stroke: "#666", strokeWidth: 2 };
  return (
    <div className="flex h-[52px] items-center justify-center gap-[10px]">
      <svg width="24" height="28" viewBox="0 0 24 28" className="mt-1" {...s}>
        <path d="M1 1h16l6 6v20H1z" strokeWidth="1.700" />
        <path d="M9 3h2M11 5h2M9 7h2M11 9h2M9 11h2M11 13h2M9 15h2" strokeWidth="1.700" /><path d="M8 18h5v4H7z" strokeWidth="1.700" />
      </svg>
      <svg width="36" height="42" viewBox="0 0 36 42" className="mt-0.5" {...s}>
        <path d="M1 1h24l10 10v30H1z" /><path d="M7 6v29h23" strokeWidth="2" /><path d="M13 10v21M19 16v15M25 21v10" strokeWidth="4" />
      </svg>
      <svg width="44" height="52" viewBox="0 0 44 52" {...s}>
        <path d="M1 1h30l12 13v37H1z" /><path d="M18 20l-7.500 8 7.500 8M26 20l7.500 8-7.500 8" strokeWidth="4" />
      </svg>
      <svg width="36" height="42" viewBox="0 0 36 42" className="mt-0.5" {...s}>
        <path d="M1 1h24l10 10v30H1z" /><path d="M6 10h12M6 18h21M6 23h21M6 28h21M6 33h21" />
      </svg>
      <svg width="24" height="28" viewBox="0 0 24 28" className="mt-1" {...s}>
        <path d="M1 1h16l6 6v20H1z" strokeWidth="1.700" /><path d="M1 25c8-4 12-11 12-18 0 8 4 12 9 14-8-1-14 1-21 5z" strokeWidth="1.700" />
      </svg>
    </div>
  );
}

function PageBody() {
  return (
    <div className="flex min-h-0 flex-1 flex-col bg-white pl-[156px]">
      <div className="mt-[21px] flex h-[26px] items-center text-[18px]">
        <span className="font-bold text-[#0366d6]">rails-demo</span><span className="ml-[5px] text-[#586069]">/</span>
      </div>
      <div className="mt-[18px] flex h-[318px] w-[980px] shrink-0 flex-col rounded-[3px] border border-[#dfe2e5] bg-[#fafbfc] pt-[100px] text-center text-[#666] shadow-[inset_0_0_10px_rgba(27,31,35,0.05)]">
        <FileArt />
        <div className="mt-[8px] text-[24px] leading-8 font-bold tracking-[0.03px]">Drag files here to add them to your repository</div>
        <div className="mt-1 text-[18px] leading-8">Or <span className="text-[#0366d6] underline decoration-1 underline-offset-[2px] [text-decoration-skip-ink:none]">choose your files</span></div>
      </div>
      <div className="mt-5 flex">
        <Identicon className="size-12 shrink-0" />
        <div className="relative ml-4 flex h-[240px] w-[916px] flex-col rounded-[3px] border border-[#e1e4e8] px-4 pt-[15px]">
          <svg width="8" height="16" viewBox="0 0 8 16" className="absolute top-[11px] -left-[7px]"><path d="M8 0L1 8l7 8z" fill="#fff" /><path d="M7.500.5L1 8l6.500 7.500" fill="none" stroke="#dfe2e5" /></svg>
          <div className="text-[20px] leading-[30px] font-bold text-[#24292e]">Commit changes</div>
          <div className="mt-[11px] flex h-[34px] shrink-0 items-center rounded-[3px] border border-[#cdd2d7] bg-[#fafbfc] pl-2 text-[14px] tracking-[0.1px] text-[#a9adb1] shadow-[inset_0_1px_2px_rgba(27,31,35,0.075)]">Add files via upload</div>
          <div className="mt-[10px] h-24 shrink-0 rounded-[3px] border border-[#cdd2d7] bg-[#fafbfc] shadow-[inset_0_1px_2px_rgba(27,31,35,0.075)]" />
        </div>
      </div>
    </div>
  );
}

/* ---------- file dialog ---------- */

const ink = "#4c4c4c";

function HomeGlyph() {
  return <svg width="16" height="14" viewBox="0 0 16 14" className="shrink-0" fill="none" stroke={ink}><path d="M.8 7.300L8 1.200l7.200 6.100" strokeWidth="2" /><path d="M3 6.500V13h10V6.500" strokeWidth="2" /><path d="M8 8.500V12.500" strokeWidth="2.600" /></svg>;
}

const PLACES = [
  ["Recent", <svg width="16" height="16" viewBox="0 0 16 16" fill="none" stroke={ink}><circle cx="8" cy="8" r="6.700" strokeWidth="1.800" /><path d="M5 6l3 2.500L12 5" strokeWidth="1.200" /></svg>],
  ["Home", <HomeGlyph />],
  ["Desktop", <svg width="16" height="16" viewBox="0 0 16 16" fill={ink}><path d="M0 1h5.500l1 1.500H14V5H2.200v9.500H0z" /><path d="M3 6h13v9H3z" /></svg>],
  ["Documents", <svg width="12" height="16" viewBox="0 0 12 16" fill="none" stroke={ink} strokeWidth="2"><path d="M1 1.500h6.500L11 5v9.500H1z" /><path d="M7 1v4.500h4z" fill={ink} strokeWidth="1" /></svg>],
  ["Downloads", <svg width="12" height="14" viewBox="0 0 12 14" fill={ink}><path d="M5 0h2v1.500H5zM5 3h2v1.500H5zM5 6h2v1.500H5z" /><path d="M.7 7L6 12.300 11.300 7" fill="none" stroke={ink} strokeWidth="2.300" /><path d="M5 9h2v2H5z" /></svg>],
  ["Music", <svg width="16" height="14" viewBox="0 0 16 14" fill="none" stroke={ink} strokeWidth="1.900"><circle cx="3.500" cy="10.300" r="2.500" /><circle cx="11.800" cy="10.300" r="2.500" /><path d="M6 10.300V1.500h8.500v8.800" /></svg>],
  ["Pictures", <svg width="14" height="13" viewBox="0 0 14 13"><path d="M0 2.500h3.500L4.500.5h5l1 2H14V13H0z" fill={ink} /><circle cx="7" cy="7.500" r="3.600" fill="#f1f0ee" /><circle cx="7" cy="7.500" r="1.900" fill={ink} /></svg>],
  ["Videos", <svg width="14" height="10" viewBox="0 0 14 10" fill={ink}><path d="M0 1.500L4 4v2L0 8.500z" /><rect x="4" y=".5" width="10" height="9" rx="1" /></svg>],
];

function Place({ icon, label, track = "tracking-[0.1px]" }) {
  return (
    <div className="flex h-[30px] shrink-0 items-center pl-[10px]">
      <div className="mt-px flex size-4 items-center justify-center">{icon}</div>
      <span className={"ml-[10px] text-[14.500px] leading-5 whitespace-nowrap text-[#4c4c4c] " + track}>{label}</span>
    </div>
  );
}

function Dialog() {
  return (
    <div className={UI + " absolute top-[217px] left-[797px] flex h-[560px] w-[620px] flex-col rounded-tl-[6px] shadow-[0_12px_44px_rgba(0,0,0,0.7)]"}>
      <div className="flex h-7 shrink-0 items-center rounded-tl-[6px] border-t border-[#6a675d] bg-linear-to-b from-[#5a574e] to-[#3f3e39] pl-[7px]">
        <svg width="36" height="18" viewBox="0 0 36 18">
          <defs><linearGradient id="cl" x2="0" y2="1"><stop stopColor="#f5906e" /><stop offset="1" stopColor="#dd4814" /></linearGradient><linearGradient id="mx" x2="0" y2="1"><stop stopColor="#8c8a82" /><stop offset="1" stopColor="#66645d" /></linearGradient></defs>
          <circle cx="8.500" cy="9" r="7.500" fill="url(#cl)" stroke="#32302b" /><path d="M6 6.500l5 5M11 6.500l-5 5" stroke="#43261a" strokeWidth="1.200" />
          <circle cx="27.500" cy="9" r="7.500" fill="url(#mx)" stroke="#32302b" /><rect x="24.500" y="6" width="6" height="6" fill="none" stroke="#35342f" />
        </svg>
        <span className="ml-[11px] text-[14px] leading-5 font-bold tracking-[0.36px] text-[#dfdbd2] [text-shadow:0_-1px_0_rgba(0,0,0,0.5)]">File Upload</span>
      </div>
      <div className="flex min-h-0 flex-1 bg-[#f1f0ee]">
        <div className="flex w-[148px] shrink-0 flex-col overflow-hidden border-t border-r border-l border-t-[#d0cecb] border-r-[#bbb9b6] border-l-[#c4c2bf] pt-[2px]">
          {PLACES.map(([label, icon]) => <Place key={label} label={label} icon={icon} />)}
          <div className="mt-[5px] mb-[3px] h-0.5 shrink-0 border-t border-b border-t-[#d3d1ce] border-b-white" />
          <Place label="Other Locatio…" track="tracking-[0.36px]" icon={<svg width="10" height="10" viewBox="0 0 10 10" stroke={ink} strokeWidth="1.900"><path d="M5 0v10M0 5h10" /></svg>} />
        </div>
        <div className="flex min-w-0 flex-1 flex-col pl-[6px]">
          <div className="mt-[7px] ml-[7px] flex h-[27px] w-[366px] shrink-0 items-stretch overflow-hidden rounded-[4px] border border-[#b3b1ae] bg-linear-to-b from-white to-[#eceae8] text-[14.500px] leading-5 text-[#4c4c4c] *:pb-0.5">
            <div className="flex w-[22px] items-center justify-center border-r border-[#c6c4c1]"><svg width="5" height="10" viewBox="0 0 5 10"><path d="M5 0v10L0 5z" fill={ink} /></svg></div>
            <div className="flex w-[114px] items-center border-r border-[#c6c4c1] pl-[6px]"><HomeGlyph /><span className="tracking-[-0.1px]">heomapmap</span></div>
            <div className="flex w-[91px] items-center justify-center border-r border-[#b3b1ae]">Documents</div>
            <div className="flex w-[115px] items-center justify-center border-r border-[#c6c4c1] bg-linear-to-b from-[#d0cfce] to-[#e0dfde]">Learning space</div>
            <div className="flex flex-1 items-center justify-center bg-[#f1f0ee]"><svg width="5" height="10" viewBox="0 0 5 10"><path d="M0 0v10l5-5z" fill="#a09e9b" /></svg></div>
          </div>
          <div className="mt-[7px] flex min-h-0 flex-1 flex-col bg-white text-[14.500px] leading-5">
            <div className="flex h-7 shrink-0 items-center border-b border-[#dcdad7] bg-linear-to-b from-white to-[#f8f8f7] pb-0.5 pl-[6px] text-[#4c4c4c]">Name</div>
            <div className="flex h-[22px] shrink-0 items-center bg-linear-to-b from-[#ea6e3c] to-[#f78453] pl-[7px] text-white">
              <svg width="16" height="14" viewBox="0 0 16 14">
                <defs><linearGradient id="fo" x2="0" y2="1"><stop stopColor="#f6c28c" /><stop offset="1" stopColor="#d4561a" /></linearGradient></defs>
                <path d="M.5 1.500q0-1 1-1H6l1 1.500h6.500v11H.5z" fill="#a9592f" /><path d="M1.500 1.500H6l1 1.500h6v1H2.500v8h-1z" fill="#f7ede4" /><path d="M3.500 4.500h12v9H2.500z" fill="url(#fo)" stroke="#b8430f" strokeWidth=".6" />
              </svg>
              <span className="mb-0.5 ml-[8px] tracking-[0.15px]">FirstDemo</span>
            </div>
          </div>
        </div>
      </div>
    </div>
  );
}

export default function App() {
  return (
    <div className="relative flex h-[768px] w-[1366px] flex-col overflow-hidden bg-white">
      <TopPanel />
      <div className="flex min-h-0 flex-1">
        <Launcher />
        <div className="flex min-w-0 flex-1 flex-col">
          <TabStrip />
          <Toolbar />
          <div className="flex min-h-0 flex-1 font-['Liberation_Sans',Arial,sans-serif]">
            <div className="flex min-w-0 flex-1 flex-col overflow-hidden">
              <PageHeader />
              <RepoHead />
              <PageBody />
            </div>
            <div className="flex w-[10px] shrink-0 justify-end border-l border-[#dddbd8] bg-[#eeedeb]">
              <div className="w-[3px] bg-[#ef7c50]" />
            </div>
          </div>
        </div>
      </div>
      <Dialog />
    </div>
  );
}
